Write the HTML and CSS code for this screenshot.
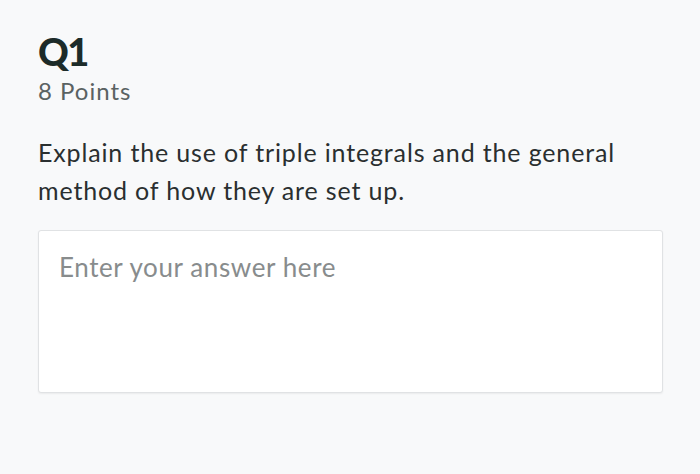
FILE: index.html
```html
<!DOCTYPE html>
<html>
<head>
<meta charset="utf-8">
<link rel="stylesheet" href="styles.css">
</head>
<body>
<div class="question">
  <h1 class="title">Q1</h1>
  <div class="points">8 Points</div>
  <p class="prompt">Explain the use of triple integrals and the general method of how they are set up.</p>
  <div class="answer"><span class="placeholder">Enter your answer here</span></div>
</div>
</body>
</html>
```

FILE: styles.css
```css
html, body {
  margin: 0;
  padding: 0;
  background: #f8f9fa;
}
body {
  font-family: Lato, "Liberation Sans", sans-serif;
  width: 700px;
  height: 474px;
  overflow: hidden;
}
.question {
  padding: 29px 37px 0 38px;
}
.title {
  margin: 0;
  font-size: 38px;
  line-height: 44px;
  font-weight: 900;
  letter-spacing: -1.5px;
  color: #1c2b29;
}
.points {
  margin-top: 3px;
  font-size: 24px;
  line-height: 30px;
  letter-spacing: 1px;
  color: #5a6262;
}
.prompt {
  margin: 27px 0 0 0;
  width: 625px;
  font-size: 25px;
  line-height: 38px;
  letter-spacing: 0.85px;
  color: #2a2f30;
}
.answer {
  margin-top: 21px;
  width: 583px;
  height: 120px;
  background: #ffffff;
  border: 1px solid #e0e2e4;
  border-radius: 3px;
  box-shadow: 0 1px 2px rgba(0, 0, 0, 0.06);
  padding: 21px 20px 20px 20px;
}
.placeholder {
  display: block;
  font-size: 26px;
  line-height: 30px;
  letter-spacing: 0.6px;
  color: #888c8d;
}
```
